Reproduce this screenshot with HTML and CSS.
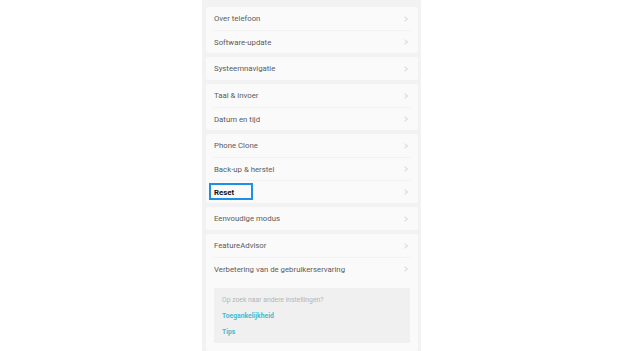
FILE: index.html
```html
<!DOCTYPE html>
<html lang="nl">
  <head>
    <meta charset="UTF-8" />
    <meta name="viewport" content="width=device-width, initial-scale=1.0" />
    <title>Systeem</title>
    <link rel="stylesheet" href="styles.css">
  </head>
  <body>
    <main class="screen">
      <section class="group">
        <div class="row"><span>Over telefoon</span><i class="chev"></i></div>
        <div class="row"><span>Software-update</span><i class="chev"></i></div>
      </section>
      <section class="group">
        <div class="row"><span>Systeemnavigatie</span><i class="chev"></i></div>
      </section>
      <section class="group">
        <div class="row"><span>Taal &amp; invoer</span><i class="chev"></i></div>
        <div class="row"><span>Datum en tijd</span><i class="chev"></i></div>
      </section>
      <section class="group">
        <div class="row"><span>Phone Clone</span><i class="chev"></i></div>
        <div class="row"><span>Back-up &amp; herstel</span><i class="chev"></i></div>
        <div class="row row-active"><span class="reset">Reset</span><i class="chev"></i><b class="highlight"></b></div>
      </section>
      <section class="group">
        <div class="row"><span>Eenvoudige modus</span><i class="chev"></i></div>
      </section>
      <section class="group group-last">
        <div class="row"><span>FeatureAdvisor</span><i class="chev"></i></div>
        <div class="row"><span>Verbetering van de gebruikerservaring</span><i class="chev"></i></div>
        <div class="suggest">
          <p class="suggest-title">Op zoek naar andere instellingen?</p>
          <a class="suggest-link" href="#">Toegankelijkheid</a>
          <a class="suggest-link" href="#">Tips</a>
        </div>
      </section>
    </main>
  </body>
</html>
```

FILE: styles.css
```css
* {
  margin: 0;
  padding: 0;
  box-sizing: border-box;
}

body {
  background: #ffffff;
  font-family: Roboto, "Noto Sans", sans-serif;
  height: 351px;
  overflow: hidden;
}

/* 手机屏幕 */
.screen {
  width: 219px;
  margin-left: 202px;
  height: 351px;
  background: #f2f2f2;
  padding: 7px 3px 0 4px;
  display: flex;
  flex-direction: column;
  gap: 4px;
}

.group {
  background: #fafafa;
  border-radius: 2px;
  padding: 0 8px;
}

.group-last {
  flex: 1;
}

.row {
  position: relative;
  height: 23px;
  display: flex;
  align-items: center;
  justify-content: space-between;
  font-size: 7.8px;
  color: #5a5a5a;
  border-top: 1px solid #f2f2f2;
}

.row:first-child {
  border-top: none;
}

.chev {
  width: 4px;
  height: 4px;
  border-top: 1px solid #dadada;
  border-right: 1px solid #dadada;
  transform: rotate(45deg);
  margin-right: 3px;
}

.reset {
  color: #111111;
  font-weight: 700;
}

/* 高亮框 */
.highlight {
  position: absolute;
  left: -5px;
  top: 2px;
  width: 44px;
  height: 17px;
  border: 2px solid #1e8fe6;
}

/* 建议区 */
.suggest {
  margin-top: 8px;
  background: #f0f0f0;
  height: 55px;
  padding: 8px 8px 0;
  display: flex;
  flex-direction: column;
  gap: 8px;
}

.suggest-title {
  font-size: 6.8px;
  color: #b5b5b5;
}

.suggest-link {
  font-size: 6.8px;
  font-weight: 700;
  color: #45bccd;
  text-decoration: none;
}
```
